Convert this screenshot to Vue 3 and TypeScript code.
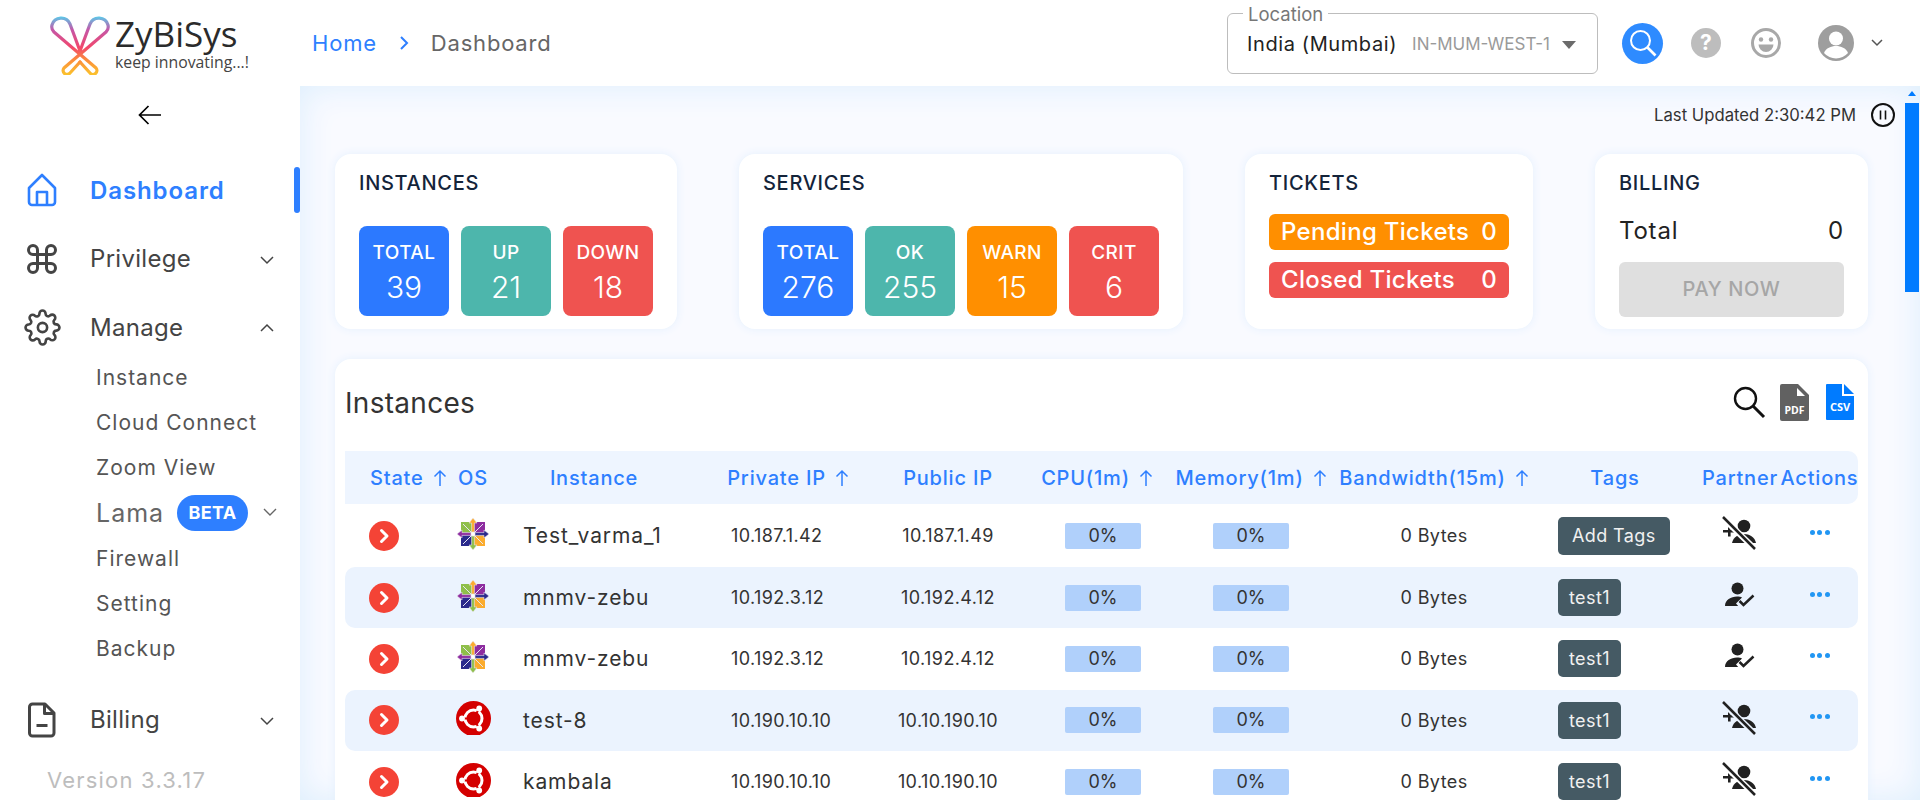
<script setup lang="ts">
interface Tile { label: string; value: number; color: string }
interface Row {
  name: string
  os: 'centos' | 'ubuntu'
  priv: string
  pub: string
  tag: string
  partner: boolean
}

const instanceTiles: Tile[] = [
  { label: 'TOTAL', value: 39, color: 'blue' },
  { label: 'UP', value: 21, color: 'teal' },
  { label: 'DOWN', value: 18, color: 'red' }
]
const serviceTiles: Tile[] = [
  { label: 'TOTAL', value: 276, color: 'blue' },
  { label: 'OK', value: 255, color: 'teal' },
  { label: 'WARN', value: 15, color: 'orange' },
  { label: 'CRIT', value: 6, color: 'red' }
]
const subItems = ['Instance', 'Cloud Connect', 'Zoom View', 'Lama', 'Firewall', 'Setting', 'Backup']
const columns = [
  { label: 'State', sort: true, cls: 'h-state' },
  { label: 'OS', sort: false, cls: 'h-os' },
  { label: 'Instance', sort: false, cls: 'h-inst' },
  { label: 'Private IP', sort: true, cls: 'h-priv' },
  { label: 'Public IP', sort: false, cls: 'h-pub' },
  { label: 'CPU(1m)', sort: true, cls: 'h-cpu' },
  { label: 'Memory(1m)', sort: true, cls: '' },
  { label: 'Bandwidth(15m)', sort: true, cls: '' },
  { label: 'Tags', sort: false, cls: '' },
  { label: 'Partner', sort: false, cls: '' },
  { label: 'Actions', sort: false, cls: '' }
]
const rows: Row[] = [
  { name: 'Test_varma_1', os: 'centos', priv: '10.187.1.42', pub: '10.187.1.49', tag: 'Add Tags', partner: false },
  { name: 'mnmv-zebu', os: 'centos', priv: '10.192.3.12', pub: '10.192.4.12', tag: 'test1', partner: true },
  { name: 'mnmv-zebu', os: 'centos', priv: '10.192.3.12', pub: '10.192.4.12', tag: 'test1', partner: true },
  { name: 'test-8', os: 'ubuntu', priv: '10.190.10.10', pub: '10.10.190.10', tag: 'test1', partner: false },
  { name: 'kambala', os: 'ubuntu', priv: '10.190.10.10', pub: '10.10.190.10', tag: 'test1', partner: false }
]
</script>

<template>
  <div class="app">
    <header class="topbar">
      <div class="brand">
        <svg class="logo" width="62" height="62" viewBox="0 0 62 62" fill="none">
          <defs>
            <linearGradient id="lg" gradientUnits="userSpaceOnUse" x1="0" y1="2" x2="0" y2="61">
              <stop offset="0" stop-color="#4fd6f0" />
              <stop offset="0.25" stop-color="#c457a8" />
              <stop offset="0.55" stop-color="#f2476c" />
              <stop offset="0.75" stop-color="#fb8a3c" />
              <stop offset="1" stop-color="#fbc02d" />
            </linearGradient>
          </defs>
          <g stroke="url(#lg)" stroke-width="3.2" stroke-linecap="round" stroke-linejoin="round">
            <path d="M31 38 L21 11 A9.6 9.6 0 0 0 3 12 Q2 16 5 19 L47 55 A3.8 3.8 0 0 1 41 60 L31 49" />
            <path d="M31 38 L41 11 A9.6 9.6 0 0 1 59 12 Q60 16 57 19 L15 55 A3.8 3.8 0 0 0 21 60 L31 49" />
          </g>
        </svg>
        <div class="brand-text">
          <div class="brand-name">ZyBiSys</div>
          <div class="brand-tag">keep innovating...!</div>
        </div>
      </div>
      <nav class="crumbs">
        <span class="crumb-home">Home</span>
        <svg width="12" height="18" viewBox="0 0 12 18" fill="none" stroke="#2e7fff" stroke-width="2">
          <path d="M3 3l6 6-6 6" />
        </svg>
        <span class="crumb-cur">Dashboard</span>
      </nav>
      <div class="top-right">
        <fieldset class="location">
          <legend>Location</legend>
          <span class="loc-name">India (Mumbai)</span>
          <span class="loc-code">IN-MUM-WEST-1</span>
          <span class="caret"></span>
        </fieldset>
        <span class="search-btn">
          <svg width="30" height="30" viewBox="0 0 30 30" fill="none" stroke="#fff" stroke-width="2">
            <circle cx="12.5" cy="12.5" r="9.5" />
            <path d="M19.5 19.5l8 8" stroke-width="2.6" />
          </svg>
        </span>
        <span class="help">?</span>
        <svg class="smile" width="30" height="30" viewBox="0 0 30 30">
          <circle cx="15" cy="15" r="13.5" fill="none" stroke="#a8a8a8" stroke-width="3" />
          <circle cx="10" cy="11.5" r="2.2" fill="#a8a8a8" />
          <circle cx="20" cy="11.5" r="2.2" fill="#a8a8a8" />
          <path d="M7.5 16.5h15a7.5 7.5 0 0 1-15 0z" fill="#a8a8a8" />
        </svg>
        <svg class="avatar" width="36" height="36" viewBox="0 0 36 36">
          <circle cx="18" cy="18" r="18" fill="#9e9e9e" />
          <circle cx="18" cy="13.5" r="7" fill="#fff" />
          <path d="M6 28c2-5 7-7 12-7s10 2 12 7a16 16 0 0 1-24 0z" fill="#fff" />
        </svg>
        <svg class="avatar-chev" width="14" height="10" viewBox="0 0 14 10" fill="none" stroke="#555" stroke-width="1.5">
          <path d="M2 2l5 5 5-5" />
        </svg>
      </div>
    </header>

    <div class="body">
      <aside class="sidebar">
        <div class="back">
          <svg width="24" height="20" viewBox="0 0 24 20" fill="none" stroke="#000" stroke-width="1.7">
            <path d="M23 10H2M10.5 1L1.5 10l9 9" />
          </svg>
        </div>

        <div class="nav-item active">
          <span class="nav-icon">
            <svg width="32" height="34" viewBox="0 0 32 34" fill="none" stroke="#2e7fff" stroke-width="2.6" stroke-linejoin="round">
              <path d="M16 2L3 15v14a3 3 0 0 0 3 3h20a3 3 0 0 0 3-3V15z" />
              <path d="M11 32V19h10v13" />
            </svg>
          </span>
          <span class="nav-label">Dashboard</span>
        </div>
        <div class="nav-item">
          <span class="nav-icon">
            <svg width="36" height="36" viewBox="0 0 24 24" fill="none" stroke="#444" stroke-width="2">
              <path d="M18 3a3 3 0 0 0-3 3v12a3 3 0 0 0 3 3 3 3 0 0 0 3-3 3 3 0 0 0-3-3H6a3 3 0 0 0-3 3 3 3 0 0 0 3 3 3 3 0 0 0 3-3V6a3 3 0 0 0-3-3 3 3 0 0 0-3 3 3 3 0 0 0 3 3h12a3 3 0 0 0 3-3 3 3 0 0 0-3-3z" />
            </svg>
          </span>
          <span class="nav-label">Privilege</span>
          <svg class="chev" width="16" height="10" viewBox="0 0 16 10" fill="none" stroke="#444" stroke-width="1.5"><path d="M2 2l6 6 6-6" /></svg>
        </div>
        <div class="nav-item">
          <span class="nav-icon">
            <svg width="37" height="37" viewBox="0 0 24 24" fill="none" stroke="#444" stroke-width="1.7">
              <circle cx="12" cy="12" r="3" />
              <path d="M19.4 15a1.65 1.65 0 0 0 .33 1.82l.06.06a2 2 0 0 1 0 2.83 2 2 0 0 1-2.83 0l-.06-.06a1.65 1.65 0 0 0-1.82-.33 1.65 1.65 0 0 0-1 1.51V21a2 2 0 0 1-2 2 2 2 0 0 1-2-2v-.09A1.65 1.65 0 0 0 9 19.4a1.65 1.65 0 0 0-1.82.33l-.06.06a2 2 0 0 1-2.83 0 2 2 0 0 1 0-2.83l.06-.06a1.65 1.65 0 0 0 .33-1.82 1.65 1.65 0 0 0-1.51-1H3a2 2 0 0 1-2-2 2 2 0 0 1 2-2h.09A1.65 1.65 0 0 0 4.6 9a1.65 1.65 0 0 0-.33-1.82l-.06-.06a2 2 0 0 1 0-2.83 2 2 0 0 1 2.83 0l.06.06a1.65 1.65 0 0 0 1.82.33H9a1.65 1.65 0 0 0 1-1.51V3a2 2 0 0 1 2-2 2 2 0 0 1 2 2v.09a1.65 1.65 0 0 0 1 1.51 1.65 1.65 0 0 0 1.82-.33l.06-.06a2 2 0 0 1 2.83 0 2 2 0 0 1 0 2.83l-.06.06a1.65 1.65 0 0 0-.33 1.82V9a1.65 1.65 0 0 0 1.51 1H21a2 2 0 0 1 2 2 2 2 0 0 1-2 2h-.09a1.65 1.65 0 0 0-1.51 1z" />
            </svg>
          </span>
          <span class="nav-label">Manage</span>
          <svg class="chev" width="16" height="10" viewBox="0 0 16 10" fill="none" stroke="#444" stroke-width="1.5"><path d="M2 8l6-6 6 6" /></svg>
        </div>
        <ul class="sub">
          <li v-for="item in subItems" :key="item">
            <span :class="{ lama: item === 'Lama' }">{{ item }}</span>
            <template v-if="item === 'Lama'">
              <span class="beta">BETA</span>
              <svg class="sub-chev" width="16" height="10" viewBox="0 0 16 10" fill="none" stroke="#666" stroke-width="1.4"><path d="M2 2l6 6 6-6" /></svg>
            </template>
          </li>
        </ul>
        <div class="nav-item billing">
          <span class="nav-icon">
            <svg width="28" height="36" viewBox="0 0 28 36" fill="none" stroke="#444" stroke-width="3" stroke-linejoin="round">
              <path d="M4.5 2H17l9 9v20a3 3 0 0 1-3 3H4.5a3 3 0 0 1-3-3V5a3 3 0 0 1 3-3z" />
              <path d="M16.5 2v9.5H26M8.5 23.5h11" />
            </svg>
          </span>
          <span class="nav-label">Billing</span>
          <svg class="chev" width="16" height="10" viewBox="0 0 16 10" fill="none" stroke="#444" stroke-width="1.5"><path d="M2 2l6 6 6-6" /></svg>
        </div>
        <div class="version">Version 3.3.17</div>
      </aside>

      <main class="main">
        <div class="content">
          <div class="updated">
            <span>Last Updated 2:30:42 PM</span>
            <svg width="24" height="24" viewBox="0 0 24 24" fill="none" stroke="#111" stroke-width="2">
              <circle cx="12" cy="12" r="11" />
              <path d="M9.5 7.5v9M14.5 7.5v9" stroke-width="1.6" />
            </svg>
          </div>

          <section class="stats">
            <div class="card">
              <h3>INSTANCES</h3>
              <div class="tiles">
                <div v-for="t in instanceTiles" :key="t.label" class="tile" :class="t.color">
                  <span class="tile-label">{{ t.label }}</span>
                  <span class="tile-value">{{ t.value }}</span>
                </div>
              </div>
            </div>
            <div class="card">
              <h3>SERVICES</h3>
              <div class="tiles">
                <div v-for="t in serviceTiles" :key="t.label" class="tile" :class="t.color">
                  <span class="tile-label">{{ t.label }}</span>
                  <span class="tile-value">{{ t.value }}</span>
                </div>
              </div>
            </div>
            <div class="card tickets">
              <h3>TICKETS</h3>
              <div class="pill orange"><span>Pending Tickets</span><span>0</span></div>
              <div class="pill red"><span>Closed Tickets</span><span>0</span></div>
            </div>
            <div class="card bill">
              <h3>BILLING</h3>
              <div class="bill-total"><span>Total</span><span>0</span></div>
              <div class="pay">PAY NOW</div>
            </div>
          </section>

          <section class="table-card">
            <div class="table-top">
              <h2>Instances</h2>
              <div class="table-tools">
                <svg class="tool-search" width="34" height="34" viewBox="0 0 34 34" fill="none" stroke="#111" stroke-width="2.4">
                  <circle cx="13.5" cy="13.5" r="10.5" />
                  <path d="M21 21l11 11" stroke-width="3" />
                </svg>
                <svg width="29" height="37" viewBox="0 0 29 37">
                  <path d="M2 0H18L29 11V35a2 2 0 0 1-2 2H2a2 2 0 0 1-2-2V2a2 2 0 0 1 2-2z" fill="#616161" />
                  <path d="M17 4v8h8z" fill="#fff" />
                  <text x="14.5" y="30" text-anchor="middle" class="doc-text">PDF</text>
                </svg>
                <svg width="28" height="36" viewBox="0 0 28 36">
                  <path d="M1 0H16V12H28V35a1 1 0 0 1-1 1H1a1 1 0 0 1-1-1V1a1 1 0 0 1 1-1z" fill="#007bff" />
                  <path d="M18 0l10 10H18z" fill="#007bff" />
                  <text x="14" y="27" text-anchor="middle" class="doc-text csv">CSV</text>
                </svg>
              </div>
            </div>

            <div class="grid thead">
              <div v-for="col in columns" :key="col.label" class="th" :class="col.cls">
                <span>{{ col.label }}</span>
                <svg v-if="col.sort" class="sort" width="14" height="18" viewBox="0 0 14 18" fill="none" stroke="#2e7fff" stroke-width="1.5">
                  <path d="M7 17V2M1.5 7.5L7 2l5.5 5.5" />
                </svg>
              </div>
            </div>

            <div v-for="(row, i) in rows" :key="i" class="grid tr" :class="{ first: i === 0, odd: i % 2 === 1 }">
              <div class="td state">
                <svg width="30" height="30" viewBox="0 0 30 30">
                  <circle cx="15" cy="15" r="15" fill="#f44336" />
                  <path d="M12.5 9.5L18 15l-5.5 5.5" fill="none" stroke="#fff" stroke-width="3" stroke-linecap="round" stroke-linejoin="round" />
                </svg>
              </div>
              <div class="td os">
                <svg v-if="row.os === 'centos'" class="os-up" width="32" height="32" viewBox="0 0 32 32">
                  <rect x="4" y="4" width="11.5" height="11.5" fill="#8fbf4a" />
                  <rect x="16.5" y="4" width="11.5" height="11.5" fill="#8e2da0" />
                  <rect x="16.5" y="16.5" width="11.5" height="11.5" fill="#fbac2e" />
                  <rect x="4" y="16.5" width="11.5" height="11.5" fill="#2a2a8c" />
                  <path d="M6 6l9 9M26 6l-9 9M6 26l9-9M26 26l-9-9" stroke="#e6e6f2" stroke-width="1" />
                  <g stroke="#ebe7f3" stroke-width="0.6">
                    <path d="M16 0l4 5h-2.6v9h-2.8V5H12z" fill="#fbac2e" />
                    <path d="M32 16l-5 4v-2.6h-9v-2.8h9V12z" fill="#2a2a8c" />
                    <path d="M16 32l-4-5h2.6v-9h2.8v9H20z" fill="#8fbf4a" />
                    <path d="M0 16l5-4v2.6h9v2.8H5V20z" fill="#8e2da0" />
                  </g>
                  <circle cx="16" cy="16" r="2" fill="#fff" />
                </svg>
                <svg v-else class="os-up" width="35" height="34" viewBox="0 0 35 34">
                  <circle cx="17.5" cy="17.5" r="17.5" fill="#d40000" />
                  <circle cx="17.5" cy="17.5" r="8.5" fill="none" stroke="#fff" stroke-width="3" />
                  <path d="M17.5 17.5L23.2 7.5M17.5 17.5L6 17.5M17.5 17.5L23.2 27.5" stroke="#d40000" stroke-width="2" />
                  <circle cx="23.2" cy="7.5" r="2.9" fill="#fff" />
                  <circle cx="6" cy="17.5" r="2.9" fill="#fff" />
                  <circle cx="23.2" cy="27.5" r="2.9" fill="#fff" />
                </svg>
              </div>
              <div class="td name">{{ row.name }}</div>
              <div class="td priv">{{ row.priv }}</div>
              <div class="td c pub">{{ row.pub }}</div>
              <div class="td c"><span class="bar">0%</span></div>
              <div class="td c"><span class="bar">0%</span></div>
              <div class="td c">0 Bytes</div>
              <div class="td tag-cell"><span class="tag" :class="{ add: i === 0 }">{{ row.tag }}</span></div>
              <div class="td c">
                <svg v-if="row.partner" class="partner" width="30" height="26" viewBox="0 0 30 26">
                  <circle cx="12.5" cy="6.5" r="6" fill="#212121" />
                  <path d="M0 24c0-6 6-9.5 12-9.5 2 0 4 .4 5 1l-6 6 2.2 2.5z" fill="#212121" />
                  <path d="M14.5 19l4 4 10-9.5" fill="none" stroke="#212121" stroke-width="2.5" />
                </svg>
                <svg v-else class="partner" width="36" height="34" viewBox="0 0 36 34">
                  <mask :id="'cut' + i">
                    <rect width="36" height="34" fill="#fff" />
                    <path d="M0 1l33 32" stroke="#000" stroke-width="6" />
                  </mask>
                  <g fill="#212121" :mask="'url(#cut' + i + ')'">
                    <circle cx="22" cy="10" r="6.3" />
                    <path d="M10 27c1-6 7-9 12-9s11 3 12 9z" />
                    <path d="M6 10h2.6v4h4v2.6h-4v4H6v-4H1V14h5z" />
                  </g>
                  <path d="M1 1l32 32" stroke="#212121" stroke-width="2.5" />
                </svg>
              </div>
              <div class="td c">
                <span class="dots"><i></i><i></i><i></i></span>
              </div>
            </div>
          </section>
        </div>
        <div class="scroll-arrow"></div>
        <div class="scroll-thumb"></div>
      </main>
    </div>
  </div>
</template>

<style>
html, body {
  margin: 0;
  overflow: hidden;
}
</style>

<style scoped>
.app {
  width: 1920px;
  height: 800px;
  overflow: hidden;
  background: #fff;
  font-family: Inter, "Noto Sans", sans-serif;
  color: #333;
  display: flex;
  flex-direction: column;
}

.topbar {
  height: 86px;
  flex: none;
  display: flex;
  align-items: center;
}
.brand {
  width: 312px;
  flex: none;
  display: flex;
  padding-left: 49px;
  box-sizing: border-box;
}
.logo {
  flex: none;
  margin-top: 1px;
}
.brand-text {
  margin: 2px 0 0 4px;
  font-family: "Open Sans", sans-serif;
  color: #2b2b2b;
}
.brand-name {
  font-size: 35px;
  line-height: 40px;
}
.brand-tag {
  font-size: 15.8px;
  line-height: 16px;
  color: #444;
}
.crumbs {
  display: flex;
  align-items: center;
  gap: 21px;
  font-size: 22px;
  letter-spacing: 0.8px;
}
.crumb-home {
  color: #2e7fff;
}
.crumb-cur {
  color: #666;
}
.top-right {
  margin-left: auto;
  display: flex;
  align-items: center;
  position: relative;
}
.location {
  margin: -8px 0 0;
  padding: 0 0 0 19px;
  width: 371px;
  height: 69px;
  box-sizing: border-box;
  border: 1px solid #bdbdbd;
  border-radius: 6px;
  display: flex;
  align-items: center;
}
.location legend {
  padding: 0 5px;
  margin-left: -4px;
  font-size: 18.5px;
  line-height: 18px;
  color: #777;
}
.loc-name {
  font-size: 20px;
  letter-spacing: 0.6px;
  color: #222;
  margin-top: -8px;
}
.loc-code {
  font-size: 17px;
  color: #9a9a9a;
  margin: -7px 0 0 15px;
}
.caret {
  margin: -6px 0 0 12px;
  border-left: 7px solid transparent;
  border-right: 7px solid transparent;
  border-top: 8px solid #6b6b6b;
}
.search-btn {
  margin-left: 24px;
  width: 41px;
  height: 41px;
  border-radius: 50%;
  background: #2e8bff;
  display: flex;
  align-items: center;
  justify-content: center;
}
.help {
  margin-left: 28px;
  width: 30px;
  height: 30px;
  border-radius: 50%;
  background: #bdbdbd;
  color: #fff;
  font-weight: 700;
  font-size: 21px;
  line-height: 30px;
  text-align: center;
}
.smile {
  margin-left: 30px;
}
.avatar {
  margin-left: 37px;
}
.avatar-chev {
  margin: 0 36px 0 16px;
}

.body {
  flex: 1;
  display: flex;
  min-height: 0;
}
.sidebar {
  width: 300px;
  flex: none;
  position: relative;
  overflow: hidden;
}
.back {
  height: 58px;
  padding-left: 138px;
  display: flex;
  align-items: center;
  margin-bottom: 12px;
}
.nav-item {
  height: 68.5px;
  display: flex;
  align-items: center;
  position: relative;
  font-size: 24px;
  letter-spacing: 0.3px;
  color: #444;
}
.nav-item.active {
  color: #2e7fff;
  font-weight: 600;
  letter-spacing: 0.9px;
}
.nav-item.active::after {
  content: "";
  position: absolute;
  right: 0;
  top: 11px;
  width: 6px;
  height: 46px;
  border-radius: 3px;
  background: #2e7fff;
}
.nav-icon {
  width: 84px;
  margin-right: 6px;
  display: flex;
  justify-content: center;
  flex: none;
}
.chev {
  position: absolute;
  left: 259px;
  top: 30px;
}
.sub {
  list-style: none;
  margin: -7px 0 14px;
  padding: 0 0 0 96px;
  font-size: 21px;
  letter-spacing: 1px;
  color: #555;
}
.sub li {
  height: 45.3px;
  display: flex;
  align-items: center;
  position: relative;
}
.lama {
  font-size: 25px;
  letter-spacing: 1px;
  color: #666;
}
.beta {
  position: absolute;
  left: 81px;
  top: 5px;
  width: 71px;
  height: 36px;
  border-radius: 18px;
  background: #2e7fff;
  color: #fff;
  font-size: 18px;
  font-weight: 700;
  letter-spacing: 0.3px;
  line-height: 36px;
  text-align: center;
}
.sub-chev {
  position: absolute;
  left: 166px;
  top: 17px;
}
.version {
  font-size: 22px;
  letter-spacing: 1.2px;
  color: #bdbdbd;
  padding-left: 47px;
  margin-top: 13px;
}

.main {
  flex: 1;
  min-width: 0;
  overflow: hidden;
  position: relative;
  background: #f9faff;
  box-shadow: inset 0 0 34px #dceefd;
}
.scroll-arrow {
  position: absolute;
  right: 4px;
  top: 5px;
  border-left: 4px solid transparent;
  border-right: 4px solid transparent;
  border-bottom: 5px solid #007bff;
}
.scroll-thumb {
  position: absolute;
  right: 1px;
  top: 17px;
  width: 14px;
  height: 189px;
  background: #007bff;
}
.content {
  padding: 0 52px 0 35px;
}
.updated {
  height: 58px;
  margin: 0 -27px 10px 0;
  display: flex;
  justify-content: flex-end;
  align-items: center;
  gap: 15px;
  font-size: 16.7px;
  color: #333;
}

.stats {
  display: flex;
  justify-content: space-between;
  margin-bottom: 30px;
}
.card {
  height: 175px;
  box-sizing: border-box;
  padding: 16px 24px 0;
  background: #fff;
  border-radius: 16px;
  box-shadow: 0 0 10px #e4f0fd;
}
.card h3 {
  margin: 0;
  font-size: 20px;
  letter-spacing: 0.7px;
  line-height: 26px;
  font-weight: 500;
  color: #14243a;
}
.tiles {
  display: flex;
  gap: 12px;
  margin-top: 30px;
}
.tile {
  width: 90px;
  height: 90px;
  border-radius: 8px;
  color: #fff;
  display: flex;
  flex-direction: column;
  align-items: center;
}
.tile-label {
  font-size: 19px;
  letter-spacing: 0.4px;
  font-weight: 500;
  line-height: 24px;
  margin-top: 15px;
}
.tile-value {
  font-size: 30px;
  font-weight: 300;
  line-height: 36px;
  margin-top: 4px;
}
.blue { background: #2c79ff; }
.teal { background: #4db6ac; }
.red { background: #ef5350; }
.orange { background: #ff8f00; }

.tickets {
  width: 288px;
}
.pill {
  height: 36px;
  box-sizing: border-box;
  padding: 0 12px 2px;
  border-radius: 6px;
  display: flex;
  justify-content: space-between;
  align-items: center;
  color: #fff;
  font-size: 24px;
  letter-spacing: 0.3px;
  font-weight: 500;
  margin-top: 12px;
}
.tickets h3 {
  margin-bottom: 18px;
}
.bill {
  width: 273px;
}
.bill-total {
  display: flex;
  justify-content: space-between;
  font-size: 24px;
  letter-spacing: 0.8px;
  line-height: 28px;
  color: #222;
  margin-top: 21px;
}
.pay {
  height: 55px;
  margin-top: 17px;
  border-radius: 6px;
  background: #dfdfdf;
  color: #a6a6a6;
  font-size: 20px;
  letter-spacing: 0.6px;
  font-weight: 500;
  line-height: 55px;
  text-align: center;
}

.table-card {
  background: #fff;
  border-radius: 16px 16px 0 0;
  padding: 0 10px;
  box-shadow: 0 0 10px #e4f0fd;
}
.table-top {
  height: 92px;
  display: flex;
  justify-content: space-between;
  align-items: center;
}
.table-top h2 {
  margin: 0 0 5px;
  font-size: 28px;
  letter-spacing: 0.3px;
  line-height: 32px;
  font-weight: 400;
  color: #333;
}
.table-tools {
  display: flex;
  align-items: center;
  gap: 17px;
  padding-right: 4px;
  margin-bottom: 6px;
}
.tool-search {
  margin-right: -3px;
}
.doc-text {
  font-family: "Open Sans", sans-serif;
  font-size: 10.5px;
  font-weight: 700;
  fill: #fff;
}
.doc-text.csv {
  font-size: 11px;
}

.grid {
  display: grid;
  grid-template-columns: 108px 40px 190px 186px 154px 160px 136px 230px 132px 118px 41px;
  padding-right: 18px;
}
.thead {
  height: 53px;
  background: #eef5ff;
  border-radius: 0 10px 10px 0;
  color: #2e7fff;
  font-size: 20px;
  letter-spacing: 0.8px;
  font-weight: 500;
}
.th {
  display: flex;
  align-items: center;
  justify-content: center;
  gap: 9px;
  white-space: nowrap;
  min-width: 0;
}
.sort {
  flex: none;
}
.th.h-state {
  justify-content: flex-start;
  padding-left: 25px;
}
.th.h-inst {
  padding-left: 12px;
}
.th.h-priv {
  padding-left: 24px;
}
.th.h-pub {
  padding-left: 4px;
}
.th.h-cpu {
  padding-right: 12px;
}
.tr {
  height: 61.3px;
  border-radius: 10px;
  font-size: 18px;
  letter-spacing: 0.4px;
  color: #333;
}
.tr.first {
  height: 63px;
}
.tr.odd {
  background: #ebf3fe;
}
.td {
  display: flex;
  align-items: center;
  min-width: 0;
  white-space: nowrap;
}
.td.c {
  justify-content: center;
}
.td.priv {
  padding-left: 48px;
}
.td.pub {
  padding-left: 4px;
}
.state {
  padding-left: 24px;
}
.os {
  justify-content: center;
}
.os-up {
  margin-top: -4px;
}
.name {
  padding-left: 30px;
  font-size: 21px;
  letter-spacing: 0.9px;
}
.bar {
  width: 76px;
  height: 26px;
  border-radius: 2px;
  background: #b0d0fb;
  font-size: 18px;
  letter-spacing: 0;
  line-height: 26px;
  text-align: center;
}
.tag-cell {
  padding-left: 9px;
}
.tag {
  height: 37px;
  padding: 0 11px;
  border-radius: 5px;
  background: #455a64;
  color: #f1f1f1;
  font-size: 18px;
  line-height: 37px;
}
.tag.add {
  height: 38px;
  line-height: 38px;
  padding: 0 14px;
}
.partner {
  margin-top: -5px;
}
.dots {
  display: flex;
  gap: 2.5px;
  margin-top: -7px;
}
.dots i {
  width: 5px;
  height: 5px;
  border-radius: 50%;
  background: #2196f3;
}
</style>
